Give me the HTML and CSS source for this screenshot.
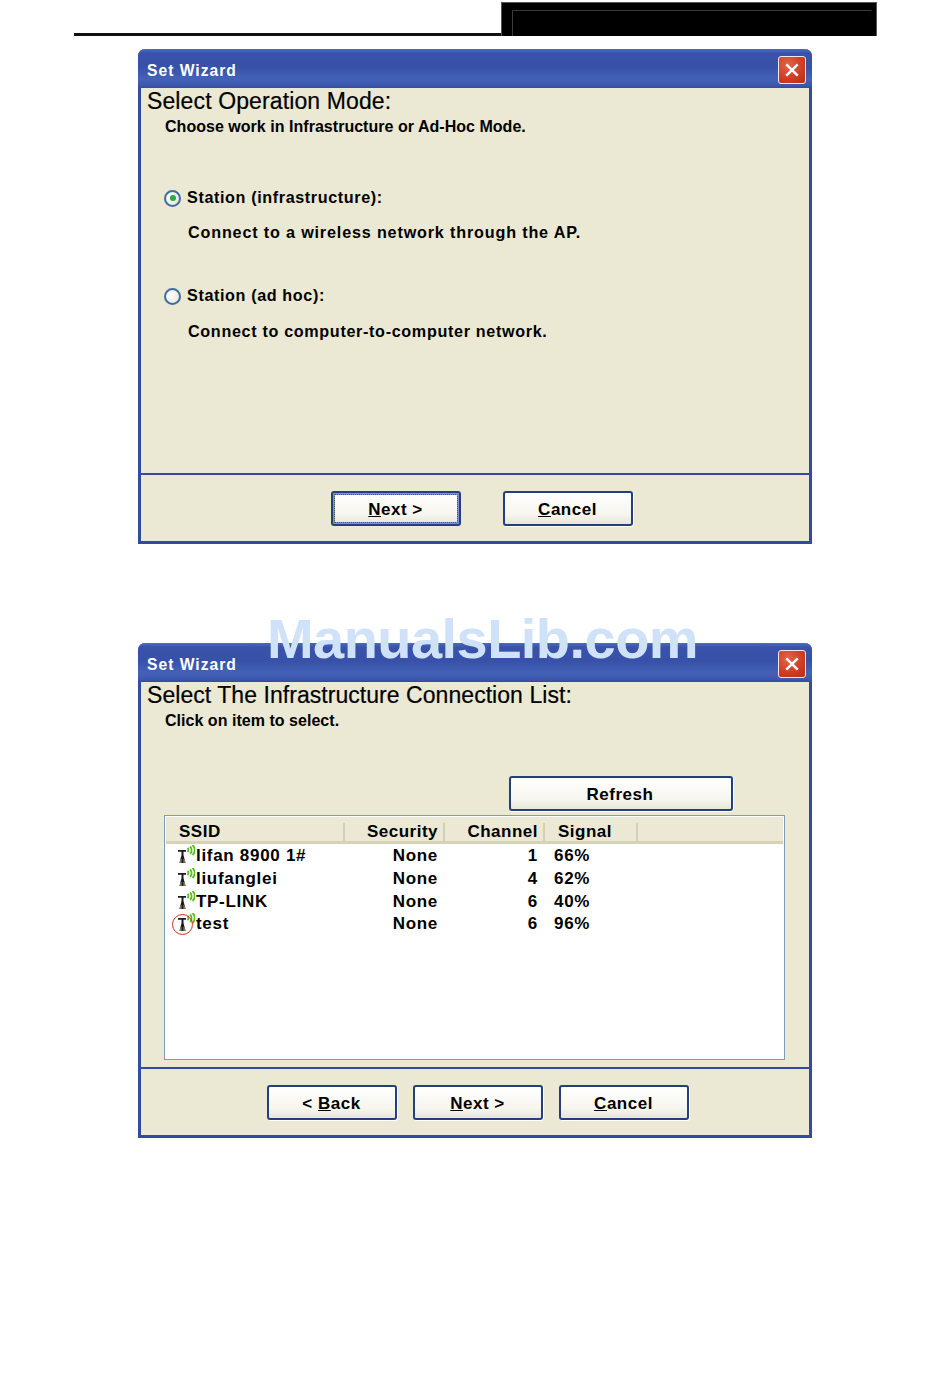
FILE: index.html
```html
<!DOCTYPE html>
<html lang="en">
<head>
<meta charset="utf-8">
<title>Set Wizard</title>
<link rel="stylesheet" href="styles.css">
</head>
<body>
<svg class="defs" width="0" height="0" aria-hidden="true">
  <symbol id="ap" viewBox="0 0 18 19">
    <path d="M1 5h8v1.800H6.500V10L8.500 18h-6l2-8V6.800H1z" fill="#1c1c1c"/>
    <path d="M3.400 14h1.300v4H2.500zM7.600 14H6.300v4h2.200z" fill="#7b7660"/>
    <path d="M10.500 3c1.300 1.200 1.300 3 0 4.200M13 1.500c2.200 2 2.200 5.400 0 7.200M15.500 0c3 2.800 3 7.500 0 10" fill="none" stroke="#58bd1c" stroke-width="1.800"/>
  </symbol>
</svg>
<div class="page">
  <header class="top">
    <div class="top-line"></div>
    <div class="top-block"><div class="top-inner"></div></div>
  </header>

  <section class="dialog first">
    <div class="titlebar">
      <span class="title">Set Wizard</span>
      <span class="close"><svg viewBox="0 0 14 14" width="16" height="16"><path d="M2 2l10 10M12 2L2 12" stroke="#fff" stroke-width="2.200"/></svg></span>
    </div>
    <div class="body">
      <h1 class="heading">Select Operation Mode:</h1>
      <p class="sub">Choose work in Infrastructure or Ad-Hoc Mode.</p>
      <div class="option option-a">
        <span class="radio checked"></span>
        <span class="opt-label">Station (infrastructure):</span>
      </div>
      <p class="opt-desc desc-a">Connect to a wireless network through the AP.</p>
      <div class="option option-b">
        <span class="radio"></span>
        <span class="opt-label">Station (ad hoc):</span>
      </div>
      <p class="opt-desc desc-b">Connect to computer-to-computer network.</p>
    </div>
    <div class="footer">
      <button class="btn focus"><u>N</u>ext &gt;</button>
      <button class="btn wide-gap"><u>C</u>ancel</button>
    </div>
  </section>

  <section class="dialog second">
    <div class="watermark">ManualsLib.com</div>
    <div class="titlebar">
      <span class="title">Set Wizard</span>
      <span class="close"><svg viewBox="0 0 14 14" width="16" height="16"><path d="M2 2l10 10M12 2L2 12" stroke="#fff" stroke-width="2.200"/></svg></span>
    </div>
    <div class="body">
      <h1 class="heading heading-long">Select The Infrastructure Connection List:</h1>
      <p class="sub">Click on item to select.</p>
      <div class="refresh-row"><button class="btn refresh">Refresh</button></div>
      <div class="list">
        <div class="list-head">
          <span class="c-ssid">SSID</span>
          <span class="c-sec">Security</span>
          <span class="c-ch">Channel</span>
          <span class="c-sig">Signal</span>
        </div>
        <div class="row">
          <span class="cell-ssid"><svg class="ap"><use href="#ap"/></svg>lifan 8900 1#</span>
          <span class="cell-sec">None</span><span class="cell-ch">1</span><span class="cell-sig">66%</span>
        </div>
        <div class="row">
          <span class="cell-ssid"><svg class="ap"><use href="#ap"/></svg>liufanglei</span>
          <span class="cell-sec">None</span><span class="cell-ch">4</span><span class="cell-sig">62%</span>
        </div>
        <div class="row">
          <span class="cell-ssid"><svg class="ap"><use href="#ap"/></svg>TP-LINK</span>
          <span class="cell-sec">None</span><span class="cell-ch">6</span><span class="cell-sig">40%</span>
        </div>
        <div class="row">
          <span class="cell-ssid"><span class="ring"></span><svg class="ap"><use href="#ap"/></svg>test</span>
          <span class="cell-sec">None</span><span class="cell-ch">6</span><span class="cell-sig">96%</span>
        </div>
      </div>
    </div>
    <div class="footer footer-three">
      <button class="btn">&lt; <u>B</u>ack</button>
      <button class="btn"><u>N</u>ext &gt;</button>
      <button class="btn"><u>C</u>ancel</button>
    </div>
  </section>
</div>
</body>
</html>
```
FILE: styles.css
```css
* { box-sizing: border-box; }
html, body { margin: 0; padding: 0; background: #fff; }
body { font-family: "Liberation Sans", Arial, sans-serif; color: #000; height: 1387px; overflow: hidden; }
.defs { position: absolute; }
.page { display: flex; flex-direction: column; }

.top { display: flex; align-items: flex-end; height: 37px; padding: 2px 73px 1px 74px; }
.top-line { width: 427px; height: 3px; background: #111; }
.top-block { flex: 1; height: 34px; background: #000; border: 1px solid #555; border-bottom: 0; padding: 7px 4px 0 10px; }
.top-inner { height: 100%; border: 1px solid #3a3a3a; border-bottom: 0; border-right-color: #000; }

.dialog { position: relative; width: 674px; height: 495px; margin-left: 138px; display: flex; flex-direction: column; background: #ebe8d4; border: 3px solid #344a9e; border-top: 0; border-radius: 7px 7px 0 0; }
.first { margin-top: 12px; }
.second { margin-top: 99px; }

.titlebar { height: 39px; margin: 0 -3px; flex: none; display: flex; align-items: center; justify-content: space-between; padding: 3px 6px 0 9px; border-radius: 7px 7px 0 0; background: linear-gradient(#4b6cc4 0, #3953aa 4px, #3851a8 18px, #4262b8 30px, #3d58ae 36px, #344a9e 39px); }
.title { color: #fff; font-size: 17px; font-weight: bold; letter-spacing: 1.1px; transform: scaleX(.92); transform-origin: left; white-space: nowrap; margin-top: 1px; }
.close { width: 28px; height: 28px; display: flex; align-items: center; justify-content: center; border: 1px solid #f2e8e4; border-radius: 3px; background: radial-gradient(circle at 35% 30%, #e2654a, #cf3a22 60%, #b92e14); margin-top: -1px; }

.body { flex: 1; padding: 0 0 0 6px; border-bottom: 2px solid #344a9e; min-height: 0; }
.heading { margin: 0; height: 26px; font-size: 23px; line-height: 26px; font-weight: normal; letter-spacing: .12px; -webkit-text-stroke: .2px #000; white-space: nowrap; }
.heading-long { letter-spacing: .05px; }
.sub { margin: 1px 0 0; padding-left: 18px; height: 23px; font-size: 16px; line-height: 24px; font-weight: bold; letter-spacing: .03px; white-space: nowrap; }

.option { display: flex; align-items: center; height: 22px; padding-left: 17px; gap: 6px; }
.option-a { margin-top: 49px; }
.option-b { margin-top: 40px; }
.radio { width: 17px; height: 17px; border-radius: 50%; border: 2px solid #3f6d9f; background: radial-gradient(circle at 35% 35%, #fff, #e4e2d6); flex: none; display: flex; align-items: center; justify-content: center; }
.radio.checked::after { content: ""; width: 6px; height: 6px; border-radius: 50%; background: #2fa84a; box-shadow: 0 0 2px #bfe6c4; }
.opt-label { font-size: 17px; font-weight: bold; letter-spacing: .65px; white-space: nowrap; transform: scaleX(.95); transform-origin: left; }
.opt-desc { margin: 12px 0 0 41px; height: 24px; font-size: 17px; line-height: 24px; font-weight: bold; white-space: nowrap; transform: scaleX(.95); transform-origin: left; }
.desc-a { letter-spacing: .88px; }
.desc-b { margin-top: 13px; letter-spacing: .7px; }

.footer { flex: none; height: 66px; display: flex; justify-content: center; align-items: center; gap: 16px; padding-left: 13px; }
.footer-three { padding-left: 5px; }
.btn { width: 130px; height: 35px; padding: 3px 0 0; font-family: inherit; font-size: 17px; font-weight: bold; letter-spacing: .5px; color: #000; border: 2px solid #243f7c; border-radius: 3px; background: linear-gradient(#fff, #f6f5ee 70%, #e8e6d8); box-shadow: 1px 1px 0 #fff; }
.wide-gap { margin-left: 26px; }
.focus { outline: 1px dotted #555; outline-offset: -4px; box-shadow: inset 0 0 0 2px #7d93d8; }

.refresh-row { display: flex; justify-content: flex-end; margin-top: 44px; padding-right: 76px; }
.refresh { width: 224px; height: 35px; padding: 2px 2px 0 0; }

.list { margin: 4px 0 0 17px; width: 621px; height: 245px; background: #fff; border: 1px solid #7f9db9; }
.list-head { height: 27px; margin: 1px; display: grid; grid-template-columns: 179px 100px 100px 93px; align-items: center; background: #ebe8d4; border-bottom: 3px solid #d6d2b6; font-size: 17px; font-weight: bold; letter-spacing: .5px; }
.list-head span { height: 18px; line-height: 18px; margin-top: 6px; border-right: 2px solid #d4d0b8; }
.c-ssid { padding-left: 13px; }
.c-sec, .c-ch { text-align: right; padding-right: 5px; }
.c-sig { padding-left: 13px; }
.row { height: 22.700px; display: grid; grid-template-columns: 179px 100px 100px 93px; align-items: center; margin: 0 1px; font-size: 17px; font-weight: bold; letter-spacing: .7px; white-space: nowrap; }
.cell-ssid { position: relative; display: flex; align-items: center; padding-left: 11px; }
.ap { width: 18px; height: 19px; margin: -3px 1px 0 0; flex: none; }
.ring { position: absolute; left: 6px; top: 0; width: 21px; height: 21px; border: 1.500px solid #c8301e; border-radius: 50%; }
.cell-sec, .cell-ch { text-align: right; padding-right: 7px; }
.cell-sig { padding-left: 9px; }

.watermark { position: absolute; left: 126px; top: -34px; z-index: 2; font-size: 56px; line-height: 60px; font-weight: bold; color: #cfe2fa; letter-spacing: -.55px; white-space: nowrap; }
```
